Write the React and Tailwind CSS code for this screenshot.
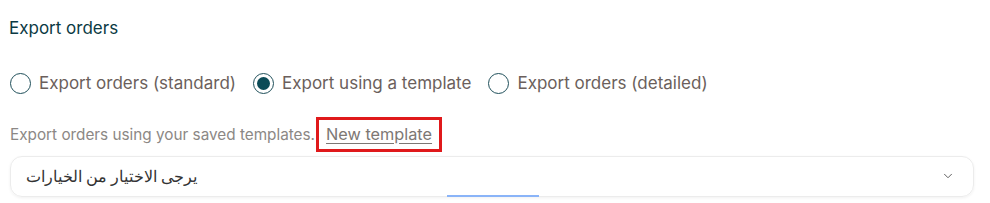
import { ChevronDown } from 'lucide-react'

const options = [
  { id: 'standard', label: 'Export orders (standard)' },
  { id: 'template', label: 'Export using a template' },
  { id: 'detailed', label: 'Export orders (detailed)' },
]

function Radio({ checked, label }) {
  return (
    <label className="flex items-center gap-[8px]">
      <span className="w-[21px] h-[21px] rounded-full border-[1.5px] border-[#1f4f5a] flex items-center justify-center">
        {checked && <span className="w-[13px] h-[13px] rounded-full bg-[#0b4b57]" />}
      </span>
      <span className="text-[17px] text-[#6b5f5c]">{label}</span>
    </label>
  )
}

export default function App() {
  return (
    <div className="w-[990px] h-[203px] bg-white pl-[10px] pr-[16px] pt-[17px]" style={{ fontFamily: 'Inter, "Noto Sans", sans-serif' }}>
      <h2 className="text-[17px] text-[#0b3a44] leading-[22px] ml-[-1px]">Export orders</h2>

      <div className="flex items-center gap-[17px] mt-[32px]">
        {options.map(o => <Radio key={o.id} checked={o.id === 'template'} label={o.label} />)}
      </div>

      <div className="flex items-center mt-[20px] text-[15.3px] text-[#8c8885] leading-[20px]">
        <span className="mt-[2px]">Export orders using your saved templates.</span>
        <span className="ml-[1px] border-[3px] border-[#e0191b] px-[7px] py-[4px]">
          <span className="underline underline-offset-[3px] text-[16.3px] text-[#7d7774]">New template</span>
        </span>
      </div>

      <div className="relative mt-[4px] h-[41px] rounded-[12px] border border-[#ececec] shadow-[0_1px_3px_rgba(0,0,0,0.06)] flex items-center justify-between pl-[15px] pr-[18px]">
        <span dir="rtl" className="text-[16px] text-[#333] font-['Noto_Sans',sans-serif]">يرجى الاختيار من الخيارات</span>
        <ChevronDown className="w-[14px] h-[14px] text-[#555]" strokeWidth={1.6} />
        <span className="absolute left-[436px] bottom-[-1px] w-[92px] h-[2px] bg-[#8ab4f8]" />
      </div>
    </div>
  )
}
